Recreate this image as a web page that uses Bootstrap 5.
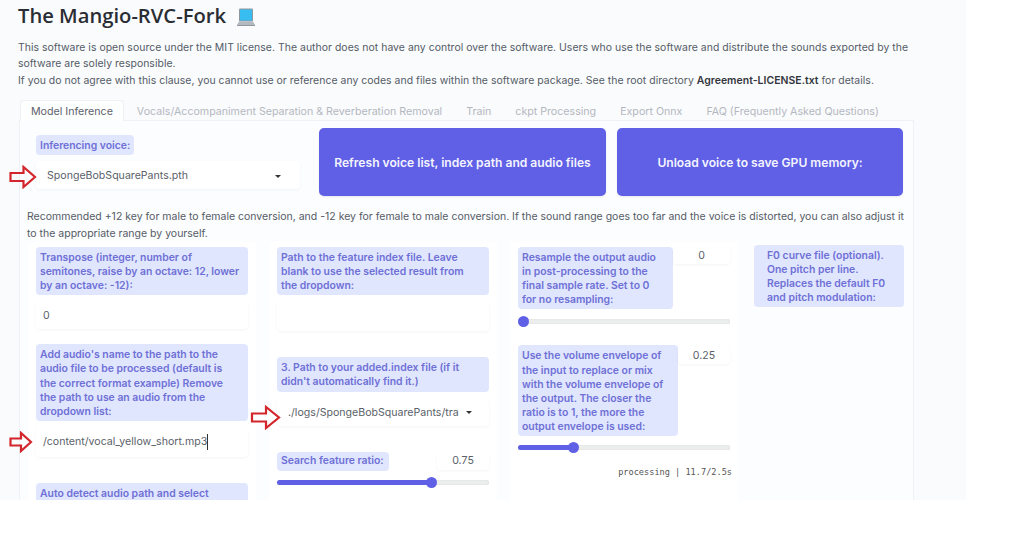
<!DOCTYPE html>
<html lang="en">
<head>
<meta charset="utf-8">
<title>The Mangio-RVC-Fork</title>
<link rel="stylesheet" href="https://cdn.jsdelivr.net/npm/bootstrap@5.3.0/dist/css/bootstrap.min.css">
<style>
html,body{background:#fff;margin:0;height:534px;overflow:hidden}
body{font-family:Inter,"Noto Sans",sans-serif;font-size:11px;color:#555b66}
.stage{position:relative;width:966px;height:500px;overflow:hidden;background:#fafbfd;padding:3px 53px 0 18px}
.ttl{font-family:"Open Sans",sans-serif;font-size:20.2px;line-height:24px;font-weight:600;color:#2a2d33;margin:0 0 13px;letter-spacing:0}
.ttl svg{vertical-align:-4px;margin-left:5px}
.para{line-height:16.4px;margin:0 0 11px;width:900px;font-size:10.45px;letter-spacing:.03px;white-space:nowrap}
.para b{color:#33363c;font-weight:600}
.tabrow{border:0;height:20px;flex-wrap:nowrap;margin-left:2px;gap:0}
.tabrow .nav-link{border:1px solid transparent;border-bottom:0;background:none;color:#b4b8bf;font-size:10.65px;padding:0 11px;line-height:22px;height:21px;border-radius:3px 3px 0 0;margin:0;white-space:nowrap}
.tabrow .nav-link.active{color:#5d626c;background:#fdfefe;border-color:#eff1f4;position:relative;padding:0 10px;z-index:1;margin-right:1px}
.panel{margin-left:1px;width:895px;height:400px;border:1px solid #eff1f4;border-bottom:0;background:#fcfdfe;padding:7px 9px 0 7px}
.voice{width:281px;padding:7px 8px 0 9px;margin-right:11px;flex:none}
.lab{background:#e0e6fe;color:#6f70d6;font-weight:600;font-size:10.4px;line-height:14.1px;padding:4px 4px 2px;border-radius:4px;display:block;white-space:nowrap}
.inline-lab{display:inline-block}
.field{background:#fff;box-shadow:0 1px 3px rgba(30,40,70,.05);border-radius:4px;font-size:10.6px;color:#5a5f69;display:flex;align-items:center;justify-content:space-between;padding:0 6px 0 7px;white-space:nowrap;border:0}
.voice .field{height:28px;margin-top:6px;padding-top:2px}
.caret-mark{width:0;height:0;border-left:3.5px solid transparent;border-right:3.5px solid transparent;border-top:3.5px solid #333;margin-right:13px}
.bigbtn{height:68px;background:#5f60e6;border:0;color:#f4f4fe;font-weight:600;font-size:12.1px;border-radius:5px;box-shadow:0 1px 2px rgba(30,40,70,.1);white-space:nowrap;padding:2px 0 0}
.bigbtn:hover{background:#5f60e6;color:#f4f4fe}
.note{line-height:16.4px;margin:13px 0 0;font-size:10.5px;white-space:nowrap}
.colcard{background:#fff;width:228px;padding:5px 8px 0;margin-left:1px;flex:none;height:262px}
.c2{margin-left:13px}
.c3{margin-left:13px}
.c4{margin-left:8px;width:166px;padding-top:3px;background:none}
.c1 .f1{height:26px;margin:8px 0 15px}
.c1 .f2{height:29px;margin:7px 0 26px;position:relative}
.c2 .f1{height:29px;margin:7px 0 26px}
.c2 .f2{height:26px;margin:8px 0 26px;padding-left:11px}
.num{height:17px;display:flex;align-items:center;justify-content:center;background:#fff;box-shadow:0 1px 3px rgba(30,40,70,.05);border-radius:4px;font-size:10.6px;color:#5a5f69}
.track{position:relative;height:5px;border-radius:3px;background:#eceded;box-shadow:inset 0 0 1px rgba(0,0,0,.2)}
.fill{height:100%;border-radius:3px;background:#5f60e6}
.thumb{position:absolute;top:-3px;width:11px;height:11px;margin-left:-5.5px;border-radius:50%;background:#5f60e6}
.stat{font-family:"DejaVu Sans Mono",monospace;font-size:8.6px;line-height:12px;color:#555;text-align:right;margin:16px -2px 0 0;white-space:nowrap}
.cursorbar{border-right:1px solid #333}
.arrow{position:absolute}
.cutlab{padding-bottom:20px}
</style>
</head>
<body>
<div class="stage">
  <h1 class="ttl">The Mangio-RVC-Fork <svg width="20" height="20" viewBox="0 0 20 20"><rect x="3" y="1.5" width="14" height="13" rx="1" fill="#8f979f"/><rect x="4" y="2.5" width="12" height="11" fill="#37bdf0"/><path d="M3 14.5h14l2 3.5H1z" fill="#b3b9bf"/><rect x="1" y="18" width="18" height="1" fill="#8f979f"/></svg></h1>
  <p class="para">This software is open source under the MIT license. The author does not have any control over the software. Users who use the software and distribute the sounds exported by the<br>software are solely responsible.<br>If you do not agree with this clause, you cannot use or reference any codes and files within the software package. See the root directory <b>Agreement-LICENSE.txt</b> for details.</p>
  <nav class="nav nav-tabs tabrow">
    <a class="nav-link active" href="#">Model Inference</a>
    <a class="nav-link" href="#">Vocals/Accompaniment Separation &amp; Reverberation Removal</a>
    <a class="nav-link" href="#">Train</a>
    <a class="nav-link" href="#">ckpt Processing</a>
    <a class="nav-link" href="#">Export Onnx</a>
    <a class="nav-link" href="#">FAQ (Frequently Asked Questions)</a>
  </nav>
  <div class="panel">
    <div class="d-flex">
      <div class="voice">
        <span class="lab inline-lab">Inferencing voice:</span>
        <div class="field"><span style="margin-left:4px">SpongeBobSquarePants.pth</span><i class="caret-mark"></i></div>
      </div>
      <button class="btn bigbtn" style="width:287px;margin-right:11px" type="button">Refresh voice list, index path and audio files</button>
      <button class="btn bigbtn" style="width:286px" type="button">Unload voice to save GPU memory:</button>
    </div>
    <p class="note">Recommended +12 key for male to female conversion, and -12 key for female to male conversion. If the sound range goes too far and the voice is distorted, you can also adjust it<br>to the appropriate range by yourself.</p>
    <div class="d-flex">
      <div class="colcard c1">
        <span class="lab">Transpose (integer, number of<br>semitones, raise by an octave: 12, lower<br>by an octave: -12):</span>
        <div class="field f1">0</div>
        <span class="lab">Add audio's name to the path to the<br>audio file to be processed (default is<br>the correct format example) Remove<br>the path to use an audio from the<br>dropdown list:</span>
        <div class="field f2"><span class="cursorbar">/content/vocal_yellow_short.mp3</span></div>
        <span class="lab cutlab">Auto detect audio path and select</span>
      </div>
      <div class="colcard c2">
        <span class="lab">Path to the feature index file. Leave<br>blank to use the selected result from<br>the dropdown:</span>
        <div class="field f1"></div>
        <span class="lab">3. Path to your added.index file (if it<br>didn't automatically find it.)</span>
        <div class="field f2"><span>./logs/SpongeBobSquarePants/tra</span><i class="caret-mark" style="margin-right:11px"></i></div>
        <div class="d-flex justify-content-between align-items-start">
          <span class="lab inline-lab" style="width:112px;padding-top:2.5px;padding-bottom:2.5px">Search feature ratio:</span>
          <div class="num" style="width:52px;margin-top:1px">0.75</div>
        </div>
        <div class="track" style="margin-top:9px"><div class="fill" style="width:73%"></div><div class="thumb" style="left:73%"></div></div>
      </div>
      <div class="colcard c3">
        <div class="d-flex align-items-start">
          <span class="lab" style="width:155px">Resample the output audio<br>in post-processing to the<br>final sample rate. Set to 0<br>for no resampling:</span>
          <div class="num flex-grow-1" style="padding-top:1px">0</div>
        </div>
        <div class="track" style="margin-top:10px"><div class="fill" style="width:0"></div><div class="thumb" style="left:5.5px"></div></div>
        <div class="d-flex align-items-start" style="margin-top:21px">
          <span class="lab" style="width:160px">Use the volume envelope of<br>the input to replace or mix<br>with the volume envelope of<br>the output. The closer the<br>ratio is to 1, the more the<br>output envelope is used:</span>
          <div class="num flex-grow-1" style="margin-top:2px">0.25</div>
        </div>
        <div class="track" style="margin-top:9px"><div class="fill" style="width:26%"></div><div class="thumb" style="left:26%"></div></div>
        <div class="stat">processing | 11.7/2.5s</div>
      </div>
      <div class="colcard c4">
        <span class="lab" style="padding-left:13px">F0 curve file (optional).<br>One pitch per line.<br>Replaces the default F0<br>and pitch modulation:</span>
      </div>
    </div>
  </div>
  <svg class="arrow" style="left:9px;top:165px" width="28" height="24" viewBox="0 0 28 24"><path d="M1.5 8h13V2L26 12 14.500 22v-6h-13z" fill="none" stroke="#d3262c" stroke-width="2.200"/></svg>
  <svg class="arrow" style="left:9px;top:431px" width="24" height="22" viewBox="0 0 24 22"><path d="M1.500 7.500h10.500V2l10 9-10 9v-5.500H1.500z" fill="none" stroke="#d3262c" stroke-width="2.200"/></svg>
  <svg class="arrow" style="left:250px;top:405px" width="31" height="25" viewBox="0 0 31 25"><path d="M2 8.500h14V2l13 10.500L16 23v-6.500H2z" fill="none" stroke="#d3262c" stroke-width="2.200"/></svg>
</div>
<script src="https://cdn.jsdelivr.net/npm/bootstrap@5.3.0/dist/js/bootstrap.bundle.min.js"></script>
</body>
</html>
